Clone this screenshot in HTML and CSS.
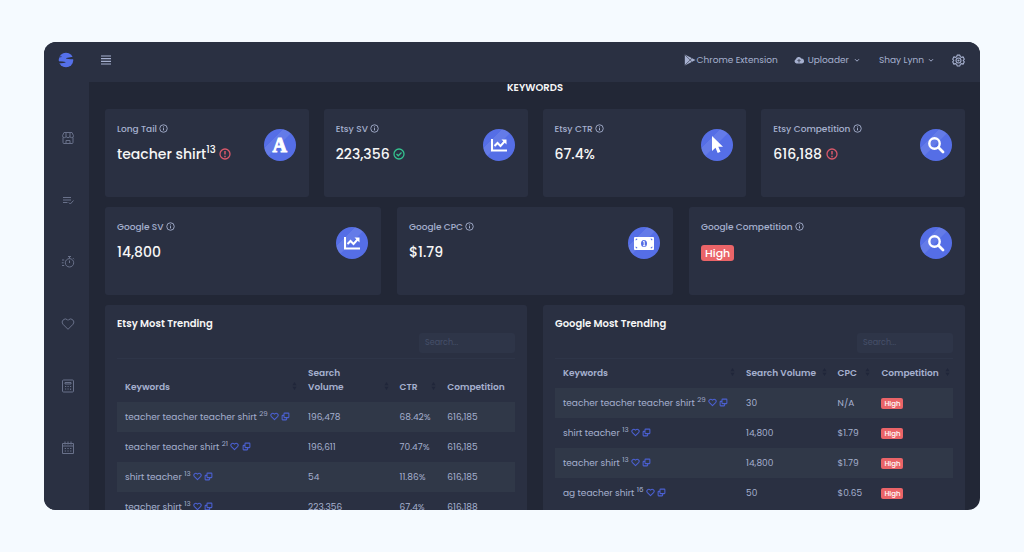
FILE: index.html
```html
<!DOCTYPE html>
<html lang="en">
<head>
<meta charset="utf-8">
<meta name="viewport" content="width=device-width, initial-scale=1">
<title>Keywords</title>
<link rel="stylesheet" href="styles.css">
</head>
<body>
<svg class="sprite" aria-hidden="true">
  <symbol id="info" viewBox="0 0 24 24"><circle cx="12" cy="12" r="10" fill="none" stroke="currentColor" stroke-width="2.4"/><path d="M12 11v6M12 6.5v2.5" stroke="currentColor" stroke-width="2.6"/></symbol>
  <symbol id="alert" viewBox="0 0 24 24"><circle cx="12" cy="12" r="10" fill="none" stroke="currentColor" stroke-width="2.6"/><path d="M12 6v7M12 15.5v3" stroke="currentColor" stroke-width="3"/></symbol>
  <symbol id="check" viewBox="0 0 24 24"><circle cx="12" cy="12" r="10" fill="none" stroke="currentColor" stroke-width="2.6"/><path d="M7 12l3.5 3.5L17 9" fill="none" stroke="currentColor" stroke-width="2.6"/></symbol>
  <symbol id="heart" viewBox="0 0 24 24"><path d="M12 20.5L3.8 12.2A5.2 5.2 0 0 1 11.2 4.900L12 5.700l.8-.8a5.200 5.200 0 0 1 7.400 7.300z" fill="none" stroke="currentColor" stroke-width="2.800" stroke-linejoin="round"/></symbol>
  <symbol id="copy" viewBox="0 0 24 24"><rect x="8" y="3" width="13" height="12" rx="1.500" fill="none" stroke="currentColor" stroke-width="2.800"/><path d="M8 9H4.500Q3 9 3 10.500v9Q3 21 4.500 21h9q1.500 0 1.500-1.500V15" fill="none" stroke="currentColor" stroke-width="2.800"/></symbol>
  <symbol id="sort" viewBox="0 0 6 10"><path d="M3 0l2.500 4h-5zM3 10L.5 6h5z" fill="currentColor"/></symbol>
  <symbol id="down" viewBox="0 0 10 10"><path d="M2.500 4l2.500 2.500L7.500 4" fill="none" stroke="currentColor" stroke-width="1.200"/></symbol>
  <symbol id="chart" viewBox="0 0 18 16"><path d="M2 2v11.500h15" fill="none" stroke="currentColor" stroke-width="2"/><path d="M4.500 9l3-3 3 3 4-4.500" fill="none" stroke="currentColor" stroke-width="2"/><path d="M11.500 2.500H16.500V7.500z" fill="currentColor"/></symbol>
  <symbol id="search" viewBox="0 0 18 18"><circle cx="7.500" cy="7.500" r="5.200" fill="none" stroke="currentColor" stroke-width="2.400"/><path d="M11.500 11.500l4.500 4.500" stroke="currentColor" stroke-width="2.800" stroke-linecap="round"/></symbol>
</svg>
<div class="app">
  <nav class="sidebar" aria-label="Main">
    <a class="logo" href="#" aria-label="Home"><svg viewBox="0 0 16 16"><circle cx="8" cy="8" r="7.300" fill="#5570ea"/><path d="M16 4.600L11 5.400Q7.500 5.800 8 6.400 9 6.900 16 7.300z" fill="#2a3042"/><path d="M0 9.200l4.500.4q3.500.2 3 .9Q6.500 11.200 0 11.300z" fill="#2a3042"/><path d="M0 5.200l3.500-.6" stroke="#2a3042" stroke-width=".8"/></svg></a>
    <a href="#" aria-label="Shop"><svg viewBox="0 0 14 14"><path d="M3 1.500h8l1.500 3.200q0 2-1.800 2T8.900 5.200Q8.800 6.700 7 6.700T5.100 5.200q-.1 1.500-1.800 1.500t-1.800-2zM5 1.500v3.500M9 1.500v3.500M2 6.500v5q0 1 1 1h8q1 0 1-1v-5M5 12.500V9.500h4v3"/></svg></a>
    <a href="#" aria-label="Lists"><svg viewBox="0 0 14 14"><path d="M2 4.500h8M2 7h8M2 9.500h4.500M7.800 9.500l1.500 1.500 3.200-3.500"/></svg></a>
    <a href="#" aria-label="Timer"><svg viewBox="0 0 14 14"><circle cx="8.500" cy="7.800" r="4.200"/><path d="M7 1.500h3M8.500 1.500v2M8.500 5.500v2.500M12 3.200l1 1M1 5h2.200M.8 7.800h1.800M1 10.500h2.200"/></svg></a>
    <a href="#" aria-label="Favorites"><svg viewBox="0 0 14 14"><path d="M7 12.300L1.900 7.200A3.200 3.200 0 0 1 6.400 2.700L7 3.300l.6-.6a3.200 3.200 0 0 1 4.500 4.500z"/></svg></a>
    <a href="#" aria-label="Calculator"><svg viewBox="0 0 14 14"><rect x="1.500" y="1" width="11" height="12" rx="1"/><path d="M4 3.500h6v1.500H4zM4 7.500h1.200M6.500 7.500h1.200M9 7.500h1.200M4 10h1.200M6.500 10h1.200M9.600 9.500v1.500"/></svg></a>
    <a href="#" aria-label="Calendar"><svg viewBox="0 0 14 14"><path d="M1.500 2.500h11v10h-11zM1.500 5h11M4 .5v3M7 .5v3M10 .5v3M3.700 7.500h1.300M6.400 7.500h1.300M9.100 7.500h1.300M3.700 10h1.300M6.400 10h1.300M9.100 10h1.300"/></svg></a>
  </nav>
  <div class="body">
    <header class="topbar">
      <button class="menu" aria-label="Toggle menu"><svg viewBox="0 0 10 10"><path d="M0 1h10M0 3.700h10M0 6.300h10M0 9h10" stroke="currentColor" stroke-width="1.200"/></svg></button>
      <a class="ext" href="#"><svg viewBox="0 0 12 12"><path d="M.8.5v11L11.500 6z" fill="currentColor"/><path d="M1 1l7 6.800M1 11l7-6.800" stroke="#2a3042" stroke-width=".6"/></svg>Chrome Extension</a>
      <button class="upload"><svg viewBox="0 0 16 12"><path d="M4 11.500A3.500 3.500 0 0 1 3 4.800 4.600 4.600 0 0 1 11.500 3.500 4 4 0 0 1 12.500 11.500z" fill="currentColor"/><path d="M8 10V6M5.700 7.500L8 5.200l2.300 2.300" fill="none" stroke="#2a3042" stroke-width="1.400"/></svg>Uploader<svg class="down"><use href="#down"/></svg></button>
      <button class="user">Shay Lynn<svg class="down"><use href="#down"/></svg></button>
      <button class="gear" aria-label="Settings"><svg viewBox="0 0 24 24" fill="none" stroke="currentColor" stroke-width="2"><path d="M9.500 2h5l.8 3 2.200 1.200 3-.9 2.300 4.200-2.200 2.500 2.200 2.500-2.300 4.200-3-.9-2.200 1.200-.8 3h-5l-.8-3-2.200-1.200-3 .9-2.300-4.200L3.400 12 1.200 9.500l2.300-4.200 3 .9L8.700 5z" stroke-linejoin="round"/><circle cx="12" cy="12" r="4.600"/><circle cx="12" cy="12" r="1"/></svg></button>
    </header>
    <main>
      <h1>KEYWORDS</h1>
      <section class="cards four">
        <article class="card"><div><h2>Long Tail <svg><use href="#info"/></svg></h2><p>teacher shirt<sup>13</sup> <svg class="bad"><use href="#alert"/></svg></p></div><span class="disc letter">A</span></article>
        <article class="card"><div><h2>Etsy SV <svg><use href="#info"/></svg></h2><p>223,356 <svg class="good"><use href="#check"/></svg></p></div><span class="disc"><svg><use href="#chart"/></svg></span></article>
        <article class="card"><div><h2>Etsy CTR <svg><use href="#info"/></svg></h2><p>67.4%</p></div><span class="disc"><svg viewBox="0 0 18 18"><path d="M4 0v15l3.500-3.300L9.700 17l2.800-1.200-2.200-5h4.700z" fill="currentColor"/></svg></span></article>
        <article class="card"><div><h2>Etsy Competition <svg><use href="#info"/></svg></h2><p>616,188 <svg class="bad"><use href="#alert"/></svg></p></div><span class="disc"><svg><use href="#search"/></svg></span></article>
      </section>
      <section class="cards three">
        <article class="card"><div><h2>Google SV <svg><use href="#info"/></svg></h2><p>14,800</p></div><span class="disc"><svg><use href="#chart"/></svg></span></article>
        <article class="card"><div><h2>Google CPC <svg><use href="#info"/></svg></h2><p>$1.79</p></div><span class="disc"><svg class="bill" viewBox="0 0 20 13"><rect width="20" height="13" rx="1" fill="currentColor"/><ellipse cx="10" cy="6.500" rx="3" ry="3.600" fill="#556ee6"/><path d="M9 5l1.200-.8v4.500M9 8.700h2.300" stroke="currentColor" fill="none"/><path d="M2 3.200V2h1.200zM16.800 2H18v1.200zM2 9.800V11h1.200zM18 9.800V11h-1.200z" fill="#556ee6" stroke="#556ee6" stroke-width=".6"/></svg></span></article>
        <article class="card"><div><h2>Google Competition <svg><use href="#info"/></svg></h2><p><span class="badge large">High</span></p></div><span class="disc"><svg><use href="#search"/></svg></span></article>
      </section>
      <section class="panels">
        <article class="panel">
          <h2>Etsy Most Trending</h2>
          <input type="search" placeholder="Search..." aria-label="Search Etsy keywords">
          <table>
            <colgroup><col class="c-key"><col class="c-vol"><col class="c-ctr"><col></colgroup>
            <thead><tr><th><button>Keywords<svg><use href="#sort"/></svg></button></th><th><button>Search<br>Volume<svg><use href="#sort"/></svg></button></th><th><button>CTR<svg><use href="#sort"/></svg></button></th><th><button>Competition</button></th></tr></thead>
            <tbody>
              <tr><td>teacher teacher teacher shirt <sup>29</sup> <a href="#" aria-label="Save"><svg><use href="#heart"/></svg></a> <a href="#" aria-label="Copy"><svg><use href="#copy"/></svg></a></td><td>196,478</td><td>68.42%</td><td>616,185</td></tr>
              <tr><td>teacher teacher shirt <sup>21</sup> <a href="#" aria-label="Save"><svg><use href="#heart"/></svg></a> <a href="#" aria-label="Copy"><svg><use href="#copy"/></svg></a></td><td>196,611</td><td>70.47%</td><td>616,185</td></tr>
              <tr><td>shirt teacher <sup>13</sup> <a href="#" aria-label="Save"><svg><use href="#heart"/></svg></a> <a href="#" aria-label="Copy"><svg><use href="#copy"/></svg></a></td><td>54</td><td>11.86%</td><td>616,185</td></tr>
              <tr><td>teacher shirt <sup>13</sup> <a href="#" aria-label="Save"><svg><use href="#heart"/></svg></a> <a href="#" aria-label="Copy"><svg><use href="#copy"/></svg></a></td><td>223,356</td><td>67.4%</td><td>616,188</td></tr>
            </tbody>
          </table>
        </article>
        <article class="panel">
          <h2>Google Most Trending</h2>
          <input type="search" placeholder="Search..." aria-label="Search Google keywords">
          <table>
            <colgroup><col class="c-key"><col class="c-vol"><col class="c-cpc"><col></colgroup>
            <thead><tr><th><button>Keywords<svg><use href="#sort"/></svg></button></th><th><button>Search Volume<svg><use href="#sort"/></svg></button></th><th><button>CPC<svg><use href="#sort"/></svg></button></th><th><button>Competition<svg><use href="#sort"/></svg></button></th></tr></thead>
            <tbody>
              <tr><td>teacher teacher teacher shirt <sup>29</sup> <a href="#" aria-label="Save"><svg><use href="#heart"/></svg></a> <a href="#" aria-label="Copy"><svg><use href="#copy"/></svg></a></td><td>30</td><td>N/A</td><td><span class="badge">High</span></td></tr>
              <tr><td>shirt teacher <sup>13</sup> <a href="#" aria-label="Save"><svg><use href="#heart"/></svg></a> <a href="#" aria-label="Copy"><svg><use href="#copy"/></svg></a></td><td>14,800</td><td>$1.79</td><td><span class="badge">High</span></td></tr>
              <tr><td>teacher shirt <sup>13</sup> <a href="#" aria-label="Save"><svg><use href="#heart"/></svg></a> <a href="#" aria-label="Copy"><svg><use href="#copy"/></svg></a></td><td>14,800</td><td>$1.79</td><td><span class="badge">High</span></td></tr>
              <tr><td>ag teacher shirt <sup>16</sup> <a href="#" aria-label="Save"><svg><use href="#heart"/></svg></a> <a href="#" aria-label="Copy"><svg><use href="#copy"/></svg></a></td><td>50</td><td>$0.65</td><td><span class="badge">High</span></td></tr>
            </tbody>
          </table>
        </article>
      </section>
    </main>
  </div>
</div>
</body>
</html>
```

FILE: styles.css
```css
* { box-sizing: border-box; }
body {
  margin: 0;
  height: 100vh;
  padding: 42px 44px;
  background: #f5faff;
  color: #a6b0cf;
  font: 9px/14px Poppins, Inter, sans-serif;
}
h1, h2, p { margin: 0; }
button { border: 0; padding: 0; background: none; color: inherit; font: inherit; cursor: pointer; }
a { color: inherit; text-decoration: none; }
.sprite { position: absolute; width: 0; height: 0; }

.app {
  display: flex;
  height: 100%;
  overflow: hidden;
  border-radius: 12px;
  background: #222736;
}
.sidebar {
  flex: 0 0 45px;
  display: flex;
  flex-direction: column;
  gap: 48px;
  padding: 10px 0 0 17px;
  background: #2a3042;
}
.sidebar a { height: 14px; }
.sidebar svg { display: block; width: 14px; height: 14px; fill: none; stroke: #69718a; stroke-width: 1; }
.sidebar .logo { height: 16px; margin: 0 0 15px -3px; }
.sidebar .logo svg { width: 16px; height: 16px; stroke: none; }

.body { flex: 1; min-width: 0; }
.topbar {
  display: flex;
  align-items: center;
  height: 40px;
  padding: 0 15px 4px 12px;
  background: #2a3042;
}
.topbar a, .topbar button { display: flex; align-items: center; }
.menu { margin-right: auto; }
.menu svg { width: 10px; height: 10px; }
.ext { gap: 1px; margin-right: 16px; }
.ext svg { width: 12px; height: 12px; }
.upload { gap: 4px; margin-right: 18px; }
.upload svg { width: 10px; height: 8px; }
.user { gap: 3px; margin-right: 17px; }
.topbar .down { width: 8px; height: 8px; }
.gear svg { width: 13px; height: 13px; }

main { padding: 0 15px 0 16px; }
h1 { padding-bottom: 15px; color: #f6f6f6; font-size: 10px; line-height: 12px; font-weight: 600; text-align: center; }
.cards { display: grid; margin-bottom: 10px; }
.four { grid-template-columns: repeat(4, 1fr); gap: 15px; }
.three { grid-template-columns: repeat(3, 1fr); gap: 16px; }
.card {
  display: flex;
  justify-content: space-between;
  min-height: 88px;
  padding: 13px 13px 12px 12px;
  border-radius: 3px;
  background: #2a3042;
}
.card h2 { font-size: 9px; line-height: 14px; font-weight: 500; }
.card h2 svg { width: 9px; height: 9px; vertical-align: -1px; }
.card p { padding-top: 8px; color: #f6f6f6; font-size: 14px; line-height: 20px; font-weight: 500; }
.card p svg { width: 12px; height: 12px; vertical-align: -1px; }
.card sup { font-size: 10px; line-height: 0; }
.bad { color: #d9586a; }
.good { color: #34c38f; }
.disc {
  display: flex;
  align-items: center;
  justify-content: center;
  width: 32px;
  height: 32px;
  margin-top: 7px;
  border-radius: 50%;
  background: linear-gradient(135deg, #556ee6 30%, #647be8 31%, #647be8 48%, #556ee6 49%);
  color: #fff;
}
.disc svg { width: 18px; height: 18px; }
.disc .bill { width: 20px; height: 13px; }
.letter { font: 700 20px/20px "Liberation Serif", serif; -webkit-text-stroke: 1px #fff; }
.badge {
  display: inline-block;
  padding: 0 3px;
  border-radius: 2px;
  background: #ea6468;
  color: #fff;
  font-size: 7px;
  line-height: 11px;
  font-weight: 500;
  vertical-align: middle;
}
.badge.large { padding: 0 4px; border-radius: 3px; font-size: 11px; line-height: 16px; }

.panels { display: grid; grid-template-columns: repeat(2, 1fr); gap: 16px; }
.panel { min-width: 0; min-height: 260px; padding: 12px; border-radius: 3px; background: #2a3042; }
.panel h2 { color: #f6f6f6; font-size: 10px; line-height: 14px; font-weight: 600; }
.panel input {
  display: block;
  width: 96px;
  height: 20px;
  margin: 2px 0 5px auto;
  padding: 0 6px;
  border: 0;
  border-radius: 3px;
  background: #2e3548;
  color: #a6b0cf;
  font: 8px/12px Poppins, Inter, sans-serif;
}
.panel input::placeholder { color: #46506a; opacity: 1; }
table { width: 100%; table-layout: fixed; border-collapse: collapse; border-top: 1px solid #2e3548; }
.c-key { width: 46%; }
.c-vol { width: 23%; }
.c-ctr { width: 12%; }
.c-cpc { width: 11%; }
th { padding: 7px 0 8px 8px; text-align: left; vertical-align: bottom; }
th button { position: relative; display: block; width: 100%; font-weight: 600; text-align: left; white-space: nowrap; }
th svg { position: absolute; right: 3px; bottom: 4px; width: 5px; height: 8px; color: #20263a; }
td { height: 30px; padding: 0 0 0 8px; white-space: nowrap; }
td sup { font-size: 7px; line-height: 0; }
td svg { width: 9px; height: 9px; vertical-align: -1px; color: #4b60d2; }
tbody tr:nth-child(odd) { background: #303848; }
```
